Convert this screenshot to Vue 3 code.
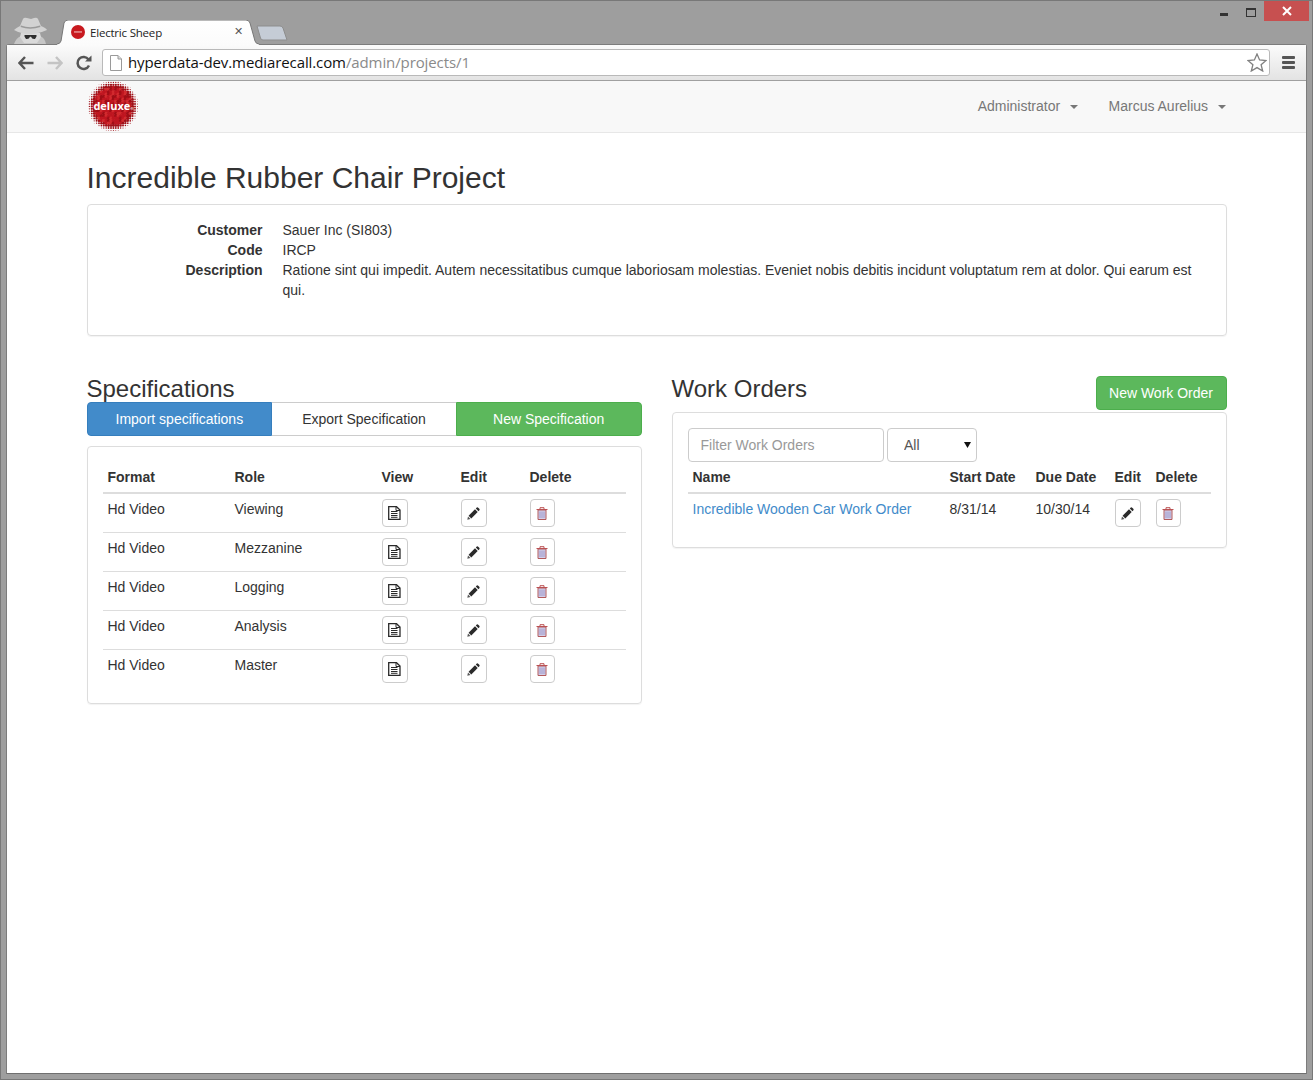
<script setup>
const customer = [
  { label: 'Customer', value: 'Sauer Inc (SI803)' },
  { label: 'Code', value: 'IRCP' },
  {
    label: 'Description',
    value:
      'Ratione sint qui impedit. Autem necessitatibus cumque laboriosam molestias. Eveniet nobis debitis incidunt voluptatum rem at dolor. Qui earum est qui.',
  },
]

const specs = [
  { format: 'Hd Video', role: 'Viewing' },
  { format: 'Hd Video', role: 'Mezzanine' },
  { format: 'Hd Video', role: 'Logging' },
  { format: 'Hd Video', role: 'Analysis' },
  { format: 'Hd Video', role: 'Master' },
]

// halftone edge of the logo
const dots = []
const step = 2.4
for (let y = -26; y <= 26; y += step) {
  for (let x = -26; x <= 26; x += step) {
    const d = Math.hypot(x, y)
    if (d > 25.5) continue
    const fade = d < 18 ? 1.8 : Math.max(0.3, 1.8 * (1 - (d - 18) / 9))
    const mottle = Math.sin(x * 0.53 + 1) * Math.cos(y * 0.71) + Math.sin((x - y) * 0.29) * Math.cos(x * 1.3)
    let fill = '#bf1620'
    if (d > 19) fill = '#a01018'
    else if (mottle > 0.6) fill = '#a00e16'
    else if (mottle < -0.6) fill = '#d22a2e'
    dots.push({ x, y, r: fade, fill })
  }
}
</script>

<template>
  <div class="frame">
    <div class="tabstrip">
      <svg class="incognito" width="35" height="28" viewBox="0 0 35 28">
        <path d="M1 28 Q3 22 8 20 L27 20 Q32 22 33 28 Z" fill="#c6c6c6" />
        <path d="M8 17 H27 L28 21 L24 27 H11 L7 21 Z" fill="#dadada" />
        <path d="M7 10 L10 3 Q11 1 14 2 L18 3 L21 2 Q24 1 25 3 L28 10 Q33 12 34 14 Q25 18 17 18 Q8 18 1 14 Q3 12 7 10 Z" fill="#d2d2d2" />
        <path d="M8 9.500 Q17 13 27 9.500 L27.500 11 Q17 14.500 7.500 11 Z" fill="#9a9a9a" />
        <path d="M11.500 19 H23.500 V20.500 L22 23 Q19 23.500 18 20.800 H17 Q16 23.500 13 23 L11.500 20.500 Z" fill="#2e2e2e" />
      </svg>
      <div class="tab">
        <svg class="tab-shape" width="202" height="25" viewBox="0 0 202 25">
          <defs>
            <linearGradient id="tabfill" x1="0" y1="0" x2="0" y2="1">
              <stop offset="0" stop-color="#ffffff" />
              <stop offset="1" stop-color="#fbfbfb" />
            </linearGradient>
          </defs>
          <path d="M0 25 V24 Q3 24 4 21 L7 3 Q8 0 11 0 H189 Q192 0 193 3 L198 21 Q199 24 202 24 V25 Z" fill="url(#tabfill)" />
          <path d="M0 24 Q3 24 4 21 L7 3 Q8 0 11 0 H189 Q192 0 193 3 L198 21 Q199 24 202 24" fill="none" stroke="#777" stroke-width="1" />
        </svg>
        <svg class="favicon" width="14" height="14" viewBox="0 0 14 14">
          <circle cx="7" cy="7" r="7" fill="#c8191f" />
          <rect x="3" y="6.300" width="8" height="1.300" fill="#eba6a6" />
        </svg>
        <span class="tab-title">Electric Sheep</span>
        <span class="tab-close">✕</span>
      </div>
      <svg class="newtab" width="32" height="16" viewBox="0 0 32 16">
        <path d="M1 1 H24 Q26 1 27 3 L31 15 H7 Q5 15 4.500 13 Z" fill="#c5ccd6" stroke="#8d8d8d" stroke-width="1" />
      </svg>
      <div class="winctl">
        <span class="win-min"></span>
        <span class="win-max"></span>
        <span class="win-close">
          <svg width="10" height="10" viewBox="0 0 10 10"><path d="M1 1 L9 9 M9 1 L1 9" stroke="#fff" stroke-width="2" /></svg>
        </span>
      </div>
    </div>

    <div class="window">
      <div class="toolbar">
        <svg class="nav-icon back" width="16" height="14" viewBox="0 0 16 14">
          <path d="M7 1 L1.500 7 L7 13 M2 7 H15.500" fill="none" stroke="#555" stroke-width="2.400" />
        </svg>
        <svg class="nav-icon fwd" width="16" height="14" viewBox="0 0 16 14">
          <path d="M9 1 L14.500 7 L9 13 M14 7 H0.500" fill="none" stroke="#c4c4c4" stroke-width="2.400" />
        </svg>
        <svg class="nav-icon reload" width="16" height="16" viewBox="0 0 16 16">
          <path d="M13 10.500 A6 6 0 1 1 12.500 4.500" fill="none" stroke="#555" stroke-width="2.500" />
          <path d="M9 6.500 H15.500 V0.500 Z" fill="#555" />
        </svg>
        <div class="omnibox">
          <svg class="doc" width="12" height="16" viewBox="0 0 12 16">
            <path d="M0.500 0.500 H8 L11.500 4 V15.500 H0.500 Z" fill="#fff" stroke="#9a9a9a" />
            <path d="M8 0.500 V4 H11.500" fill="#ddd" stroke="#9a9a9a" />
          </svg>
          <span class="url">hyperdata-dev.mediarecall.com<span class="url-path">/admin/projects/1</span></span>
          <svg class="star" width="20" height="19" viewBox="0 0 20 19">
            <path d="M10 1 L12.600 7 L19 7.500 L14.100 11.700 L15.700 18 L10 14.600 L4.300 18 L5.900 11.700 L1 7.500 L7.400 7 Z" fill="#fff" stroke="#808080" stroke-width="1.300" />
          </svg>
        </div>
        <div class="menu-icon"><span></span><span></span><span></span></div>
      </div>

      <div class="page">
        <nav class="navbar">
          <svg class="logo" width="50" height="50" viewBox="-25 -25 50 50">
            <circle v-for="(d, i) in dots" :key="i" :cx="d.x" :cy="d.y" :r="d.r" :fill="d.fill" />
            <text x="0.500" y="4" text-anchor="middle" class="logo-text">deluxe<tspan class="logo-reg">®</tspan></text>
          </svg>
          <div class="nav-right">
            <a class="nav-link">Administrator <span class="caret"></span></a>
            <a class="nav-link">Marcus Aurelius <span class="caret"></span></a>
          </div>
        </nav>

        <main class="main">
          <h1>Incredible Rubber Chair Project</h1>

          <section class="panel summary">
            <dl>
              <template v-for="row in customer" :key="row.label">
                <dt>{{ row.label }}</dt>
                <dd>{{ row.value }}</dd>
              </template>
            </dl>
          </section>

          <div class="columns">
            <section>
              <h2>Specifications</h2>
              <div class="btn-group">
                <button class="btn primary">Import specifications</button>
                <button class="btn plain">Export Specification</button>
                <button class="btn success">New Specification</button>
              </div>
              <div class="panel">
                <table>
                  <colgroup>
                    <col style="width: 127px" />
                    <col style="width: 147px" />
                    <col style="width: 79px" />
                    <col style="width: 69px" />
                    <col />
                  </colgroup>
                  <thead>
                    <tr><th>Format</th><th>Role</th><th>View</th><th>Edit</th><th>Delete</th></tr>
                  </thead>
                  <tbody>
                    <tr v-for="(spec, i) in specs" :key="i">
                      <td>{{ spec.format }}</td>
                      <td>{{ spec.role }}</td>
                      <td>
                        <span class="icon-btn">
                          <svg width="13" height="14" viewBox="0 0 13 14">
                            <path d="M0.700 0.700 H8.500 L12 4 V13.300 H0.700 Z" fill="#fff" stroke="#2a2a2a" stroke-width="1.300" />
                            <path d="M8 0.700 V4.500 H12" fill="none" stroke="#2a2a2a" />
                            <path d="M3 5.500 H9.500 M3 7.500 H9.500 M3 9.500 H9.500 M3 11.300 H9.500" stroke="#2a2a2a" />
                          </svg>
                        </span>
                      </td>
                      <td>
                        <span class="icon-btn">
                          <svg width="13" height="13" viewBox="0 0 13 13">
                            <path d="M0.300 12.700 L1 9.500 L3.500 12 Z" fill="#555" />
                            <path d="M1.600 8.700 L8 2.300 L10.700 5 L4.300 11.400 Z" fill="#2a2a2a" />
                            <path d="M8.800 1.500 L9.800 0.600 Q10.500 0 11.200 0.700 L12.300 1.800 Q13 2.500 12.400 3.200 L11.500 4.200 Z" fill="#2a2a2a" />
                          </svg>
                        </span>
                      </td>
                      <td>
                        <span class="icon-btn trash">
                          <svg width="12" height="13" viewBox="0 0 12 13">
                            <path d="M2 3 H10 V12.500 H2 Z" fill="#d3cfe8" stroke="#b25a5c" />
                            <path d="M4 4.500 V11 M6 4.500 V11 M8 4.500 V11" stroke="#9d97ca" />
                            <path d="M0.500 2.500 H11.500 M4 2.500 V0.700 H8 V2.500" fill="none" stroke="#bb5052" />
                          </svg>
                        </span>
                      </td>
                    </tr>
                  </tbody>
                </table>
              </div>
            </section>

            <section>
              <div class="orders-head">
                <h2>Work Orders</h2>
                <button class="btn success rounded">New Work Order</button>
              </div>
              <div class="panel">
                <div class="filters">
                  <input class="filter-input" placeholder="Filter Work Orders" />
                  <div class="select-wrap">
                    <select class="filter-select">
                      <option>All</option>
                    </select>
                    <svg class="select-arrow" width="7" height="6" viewBox="0 0 7 6"><path d="M0 0 H7 L3.500 6 Z" fill="#111" /></svg>
                  </div>
                </div>
                <table>
                  <colgroup>
                    <col style="width: 257px" />
                    <col style="width: 86px" />
                    <col style="width: 79px" />
                    <col style="width: 41px" />
                    <col />
                  </colgroup>
                  <thead>
                    <tr><th>Name</th><th>Start Date</th><th>Due Date</th><th>Edit</th><th>Delete</th></tr>
                  </thead>
                  <tbody>
                    <tr>
                      <td><a class="link">Incredible Wooden Car Work Order</a></td>
                      <td>8/31/14</td>
                      <td>10/30/14</td>
                      <td>
                        <span class="icon-btn">
                          <svg width="13" height="13" viewBox="0 0 13 13">
                            <path d="M0.300 12.700 L1 9.500 L3.500 12 Z" fill="#555" />
                            <path d="M1.600 8.700 L8 2.300 L10.700 5 L4.300 11.400 Z" fill="#2a2a2a" />
                            <path d="M8.800 1.500 L9.800 0.600 Q10.500 0 11.200 0.700 L12.300 1.800 Q13 2.500 12.400 3.200 L11.500 4.200 Z" fill="#2a2a2a" />
                          </svg>
                        </span>
                      </td>
                      <td>
                        <span class="icon-btn trash">
                          <svg width="12" height="13" viewBox="0 0 12 13">
                            <path d="M2 3 H10 V12.500 H2 Z" fill="#d3cfe8" stroke="#b25a5c" />
                            <path d="M4 4.500 V11 M6 4.500 V11 M8 4.500 V11" stroke="#9d97ca" />
                            <path d="M0.500 2.500 H11.500 M4 2.500 V0.700 H8 V2.500" fill="none" stroke="#bb5052" />
                          </svg>
                        </span>
                      </td>
                    </tr>
                  </tbody>
                </table>
              </div>
            </section>
          </div>
        </main>
      </div>
    </div>
  </div>
</template>

<style>
body {
  margin: 0;
  background: #9e9e9e;
}
</style>

<style scoped>
.frame {
  height: 1080px;
  box-sizing: border-box;
  display: flex;
  flex-direction: column;
  padding-bottom: 5px;
  background: #9e9e9e;
  border: 1px solid #787878;
  font-family: "Liberation Sans", Arial, sans-serif;
  font-size: 14px;
  line-height: 20px;
  color: #333;
  overflow: hidden;
}

.tabstrip {
  position: relative;
  z-index: 1;
  height: 43px;
  flex: none;
  display: flex;
  align-items: flex-start;
  padding-left: 12px;
  padding-right: 3px;
}

.incognito {
  margin-top: 15px;
}

.tab {
  position: relative;
  width: 202px;
  height: 24px;
  margin-top: 19px;
  margin-left: 9px;
  display: flex;
  align-items: center;
  padding: 0 0 0 14px;
  box-sizing: border-box;
  font-family: "Open Sans", sans-serif;
  font-size: 11.500px;
  letter-spacing: -0.2px;
  color: #222;
}

.tab-shape {
  position: absolute;
  left: 0;
  top: 0;
}

.favicon {
  position: relative;
}

.tab-title {
  position: relative;
  margin-left: 5px;
  padding-top: 1px;
}

.tab-close {
  position: absolute;
  left: 177px;
  top: 2px;
  font-size: 11px;
  font-weight: bold;
  color: #555;
  font-family: "DejaVu Sans", sans-serif;
}

.newtab {
  margin-top: 24px;
  margin-left: -3px;
}

.winctl {
  margin-left: auto;
  display: flex;
  align-items: flex-start;
}

.win-min {
  width: 8px;
  height: 3px;
  margin-top: 12px;
  margin-right: 18px;
  background: #333;
}

.win-max {
  width: 8px;
  height: 6px;
  margin-top: 7px;
  margin-right: 8px;
  border: 1px solid #333;
  border-top-width: 2px;
}

.win-close {
  width: 45px;
  height: 20px;
  display: flex;
  align-items: center;
  justify-content: center;
  background: #c75050;
}

.window {
  flex: 1;
  margin: 0 5px;
  display: flex;
  flex-direction: column;
  border: 1px solid #7c7c7c;
  border-bottom-color: #6f6f6f;
  border-radius: 3px 3px 0 0;
  background: #fff;
  min-height: 0;
}

.toolbar {
  height: 36px;
  flex: none;
  display: flex;
  align-items: center;
  box-sizing: border-box;
  border-bottom: 1px solid #a0a0a0;
  background: linear-gradient(#fbfbfb, #e3e3e3);
}

.nav-icon {
  flex: none;
}

.back {
  margin-left: 11px;
}

.fwd {
  margin-left: 13px;
}

.reload {
  margin-left: 13px;
}

.omnibox {
  flex: 1;
  height: 27px;
  box-sizing: border-box;
  margin-left: 10px;
  display: flex;
  align-items: center;
  border: 1px solid #b9b9b9;
  border-radius: 3px;
  background: #fff;
  padding-left: 7px;
  padding-right: 2px;
}

.doc {
  flex: none;
}

.url {
  margin-left: 6px;
  margin-bottom: 2px;
  font-family: "Open Sans", sans-serif;
  font-size: 15px;
  color: #111;
  letter-spacing: -0.1px;
}

.url-path {
  color: #8a8a8a;
}

.star {
  margin-left: auto;
}

.menu-icon {
  width: 13px;
  margin: 0 11px 0 12px;
  display: flex;
  flex-direction: column;
  gap: 2px;
}

.menu-icon span {
  height: 3px;
  background: #555;
  border-radius: 1px;
}

.page {
  flex: 1;
  background: #fff;
}

.navbar {
  height: 52px;
  box-sizing: border-box;
  display: flex;
  align-items: flex-start;
  justify-content: space-between;
  padding: 0 80px 0 81px;
  background: #f8f8f8;
  border-bottom: 1px solid #e7e7e7;
}

.logo {
  display: block;
}

.logo-text {
  font-family: "Open Sans", sans-serif;
  font-size: 11px;
  font-weight: bold;
  fill: #fff;
}

.logo-reg {
  font-size: 4px;
}

.nav-right {
  display: flex;
  gap: 30.500px;
  padding-top: 15px;
}

.nav-link {
  color: #777;
}

.caret {
  display: inline-block;
  width: 0;
  height: 0;
  margin-left: 6px;
  vertical-align: middle;
  border-top: 4px solid #777;
  border-left: 4px solid transparent;
  border-right: 4px solid transparent;
}

.main {
  padding: 28px 79.500px 0;
}

h1 {
  margin: 0 0 10px;
  font-size: 30px;
  line-height: 33px;
  font-weight: 500;
  color: #333;
}

h2 {
  margin: 0;
  font-size: 24px;
  line-height: 26px;
  font-weight: 500;
  color: #333;
}

.panel {
  border: 1px solid #ddd;
  border-radius: 4px;
  padding: 15px;
  box-shadow: 0 1px 1px rgba(0, 0, 0, 0.05);
}

dl {
  margin: 0 0 20px;
  display: grid;
  grid-template-columns: 160px 1fr;
  column-gap: 20px;
}

dt {
  font-weight: 700;
  text-align: right;
}

dd {
  margin: 0;
}

.columns {
  margin-top: 40px;
  display: grid;
  grid-template-columns: 555px 555px;
  column-gap: 30px;
}

.btn-group {
  display: flex;
  margin-bottom: 10px;
}

.btn {
  height: 34px;
  box-sizing: border-box;
  border: 1px solid transparent;
  font-family: inherit;
  font-size: 14px;
  line-height: 20px;
  padding: 6px 12.500px;
  margin: 0;
}

.btn-group .btn {
  flex: 1;
  padding: 6px 0;
}

.primary {
  background: #428bca;
  border-color: #357ebd;
  color: #fff;
  border-radius: 4px 0 0 4px;
}

.plain {
  background: #fff;
  border-color: #ccc;
  border-left: none;
  border-right: none;
  color: #333;
}

.success {
  background: #5cb85c;
  border-color: #4cae4c;
  color: #fff;
  border-radius: 0 4px 4px 0;
}

.success.rounded {
  border-radius: 4px;
}

.orders-head {
  height: 36px;
  display: flex;
  align-items: flex-start;
  justify-content: space-between;
}

.filters {
  display: flex;
  gap: 3px;
}

.filter-input {
  width: 196px;
  height: 34px;
  box-sizing: border-box;
  padding: 6px 12px;
  border: 1px solid #ccc;
  border-radius: 4px;
  font-family: inherit;
  font-size: 14px;
  color: #555;
  outline: none;
}

.filter-input::placeholder {
  color: #999;
  opacity: 1;
}

.select-wrap {
  position: relative;
  width: 90px;
  height: 34px;
}

.filter-select {
  width: 100%;
  height: 100%;
  box-sizing: border-box;
  appearance: none;
  padding: 6px 16.500px;
  border: 1px solid #ccc;
  border-radius: 4px;
  background: #fff;
  font-family: inherit;
  font-size: 14px;
  color: #555;
}

.select-arrow {
  position: absolute;
  right: 6px;
  top: 14px;
  pointer-events: none;
}

table {
  width: 100%;
  table-layout: fixed;
  border-collapse: collapse;
}

th {
  padding: 5px;
  text-align: left;
  font-weight: 700;
  border-bottom: 2px solid #ddd;
}

td {
  padding: 5px;
  vertical-align: top;
  border-bottom: 1px solid #ddd;
  color: #333;
}

tbody tr:last-child td {
  border-bottom: none;
}

.link {
  color: #428bca;
}

.icon-btn {
  width: 26px;
  height: 28px;
  box-sizing: border-box;
  display: flex;
  align-items: center;
  justify-content: center;
  border: 1px solid #ccc;
  border-radius: 4px;
  background: #fff;
}

.icon-btn.trash {
  width: 25px;
}
</style>
